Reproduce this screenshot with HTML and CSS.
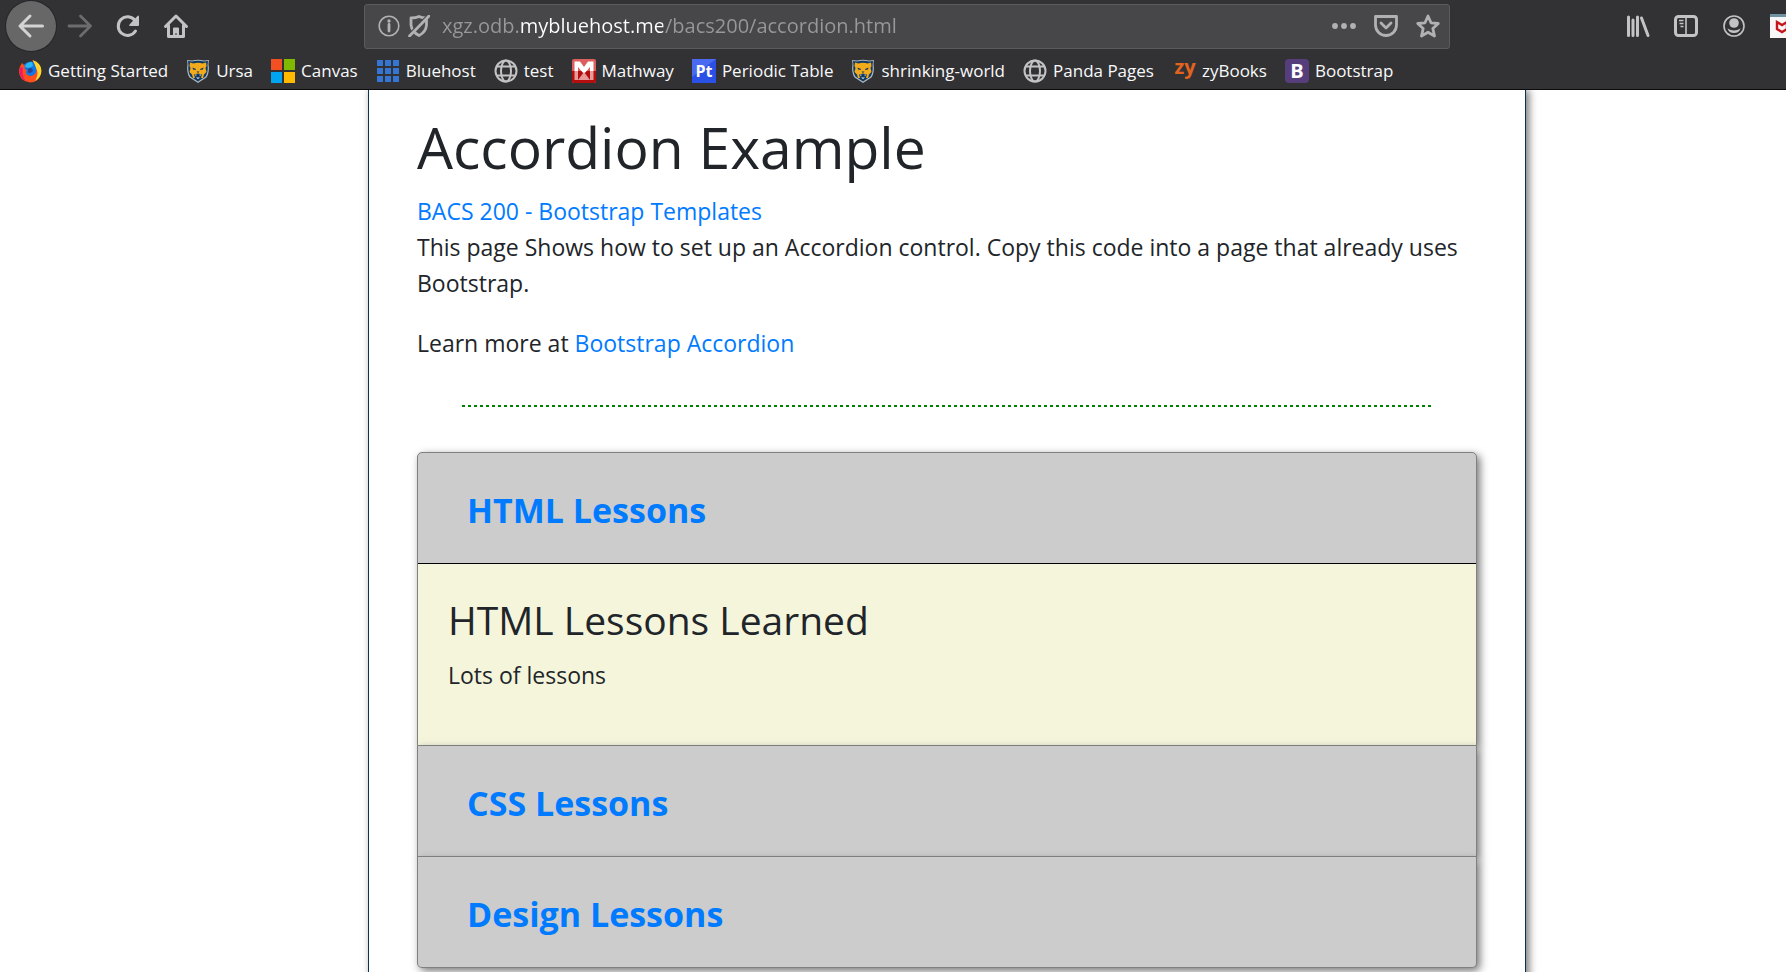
FILE: index.html
```html
<!DOCTYPE html>
<html lang="en">
<head>
<meta charset="utf-8">
<title>Accordion Example</title>
<link rel="stylesheet" href="styles.css">
</head>
<body>
<svg class="defs" aria-hidden="true">
  <symbol id="bear" viewBox="0 0 24 24">
    <path d="M1 1 6 1.500Q12 0 18 1.500L23 1 22.500 5Q24 13 20.500 18.500L12 24 3.500 18.500Q0 13 1.500 5Z" fill="#a9b4bd"/>
    <path d="M2 2 6 2.500Q12 1 18 2.500L22 2 21.500 6Q22.500 13 19.500 17.500L12 22.500 4.500 17.500Q1.500 13 2.500 6Z" fill="#123a60"/>
    <path d="M4 3.500 7.500 4.500Q12 3 16.500 4.500L20 3.500 20.500 7 19.500 9 20.500 13 18 15.500 17 19H7L6 15.500 3.500 13 4.500 9 3.500 7Z" fill="#f3ab1c"/>
    <path d="M6.500 8.500 10 10 9.500 11 7 10.500ZM17.500 8.500 14 10 14.500 11 17 10.500ZM10.500 12.500H13.500L12 14ZM8 15.500 12 14.500 16 15.500 15 19H9Z" fill="#123a60"/>
    <path d="M9 15.500H10.500L10 17.500ZM13.500 15.500H15L14 17.500ZM10 18.500H14L12 20Z" fill="#e8edf0"/>
  </symbol>
  <symbol id="globe" viewBox="0 0 24 24">
    <g fill="none" stroke="#c3c3c4" stroke-width="2"><circle cx="12" cy="12" r="10.500"/><ellipse cx="12" cy="12" rx="5" ry="10.500"/><path d="M3 7.500H21M3 16.500H21" stroke-width="1.800"/></g>
  </symbol>
</svg>
<header class="chrome">
  <div class="toolbar">
    <nav class="nav-buttons" aria-label="Navigation">
      <button class="back" aria-label="Back"><svg class="icon" viewBox="0 0 24 24"><path d="M1 12H23.500M11 2 1 12 11 22" fill="none" stroke="#d3d3d4" stroke-width="3" stroke-linecap="round" stroke-linejoin="round"/></svg></button>
      <button class="tool" aria-label="Forward"><svg class="icon" viewBox="0 0 24 24"><path d="M1 12H22.500M12.500 2 22.500 12 12.500 22" fill="none" stroke="#6c6c6e" stroke-width="2.800" stroke-linecap="round" stroke-linejoin="round"/></svg></button>
      <button class="tool" aria-label="Reload"><svg class="icon" viewBox="0 0 24 24"><path d="M19.500 17A9.300 9.300 0 1 1 19 6.500" fill="none" stroke="#c3c3c4" stroke-width="3" stroke-linecap="round"/><path d="M22 1.500Q23 1.500 23 2.500V11Q23 12 22 12H14Q12.500 12 13.500 10.500Z" fill="#c3c3c4"/></svg></button>
      <button class="tool" aria-label="Home"><svg class="icon" viewBox="0 0 24 24"><path d="M1.500 12.500 12 2 22.500 12.500M4.500 11V22.500H19.500V11" fill="none" stroke="#c3c3c4" stroke-width="3" stroke-linecap="round" stroke-linejoin="round"/><path d="M9 23V14.500Q9 13.500 10 13.500H14Q15 13.500 15 14.500V23H12.500V19H11.500V23Z" fill="#c3c3c4"/></svg></button>
    </nav>
    <div class="urlbar">
      <button class="slim" aria-label="Site information"><svg class="icon22" viewBox="0 0 22 22"><circle cx="11" cy="11" r="9.800" fill="none" stroke="#b1b1b3" stroke-width="1.600"/><path d="M11 9.500V16" stroke="#b1b1b3" stroke-width="2.800" stroke-linecap="round"/><circle cx="11" cy="6" r="1.700" fill="#b1b1b3"/></svg></button>
      <button class="slim" aria-label="Tracking protection"><svg class="icon22" viewBox="0 0 22 22"><path d="M3 3Q8 3 11 1.500 14 3 18.500 3V10Q18 17 11 20.500 4 17 3 10Z" fill="none" stroke="#b1b1b3" stroke-width="2.800" stroke-linejoin="round"/><path d="M20 0 0.500 20" stroke="#474749" stroke-width="2"/><path d="M21 1 1.500 21" stroke="#b1b1b3" stroke-width="2.800" stroke-linecap="round"/></svg></button>
      <input class="address" type="text" aria-label="Address" value="xgz.odb.mybluehost.me/bacs200/accordion.html">
      <button class="action" aria-label="Page actions"><svg class="icon" viewBox="0 0 24 24" fill="#b1b1b3"><circle cx="3" cy="12" r="2.900"/><circle cx="12" cy="12" r="2.900"/><circle cx="21" cy="12" r="2.900"/></svg></button>
      <button class="action" aria-label="Save to Pocket"><svg class="icon" viewBox="0 0 24 24" fill="none" stroke="#b1b1b3" stroke-width="2.800" stroke-linecap="round" stroke-linejoin="round"><path d="M1.500 2.500H22.500V11A10.500 10.500 0 0 1 1.500 11Z"/><path d="M7 9 12 14 17 9"/></svg></button>
      <button class="action" aria-label="Bookmark this page"><svg class="icon" viewBox="0 0 24 24"><path d="M12 2 15 8.800 22.300 9.500 16.800 14.500 18.500 22 12 18.200 5.500 22 7.200 14.500 1.700 9.500 9 8.800Z" fill="none" stroke="#b1b1b3" stroke-width="2.800" stroke-linejoin="round"/></svg></button>
    </div>
    <div class="extras">
      <button class="tool" aria-label="Library"><svg class="icon" viewBox="0 0 24 24" stroke="#c3c3c4" stroke-width="3" stroke-linecap="round"><path d="M2.500 3V21.500M7 6V21.500M11.500 3V21.500M15.500 4 22 21.500"/></svg></button>
      <button class="tool" aria-label="Sidebars"><svg class="icon" viewBox="0 0 24 24" fill="none" stroke="#c3c3c4"><rect x="1.500" y="2.500" width="21" height="19" rx="3" stroke-width="3"/><path d="M12 3V21" stroke-width="1.600"/><path d="M5 6.500H9.500M5.500 9.500H9.500M6.500 12.500H9.500" stroke-width="1.400"/></svg></button>
      <button class="tool" aria-label="Account"><svg class="icon" viewBox="0 0 24 24"><circle cx="12" cy="12" r="10" fill="none" stroke="#c3c3c4" stroke-width="1.600"/><circle cx="12" cy="9" r="4.800" fill="#c3c3c4"/><path d="M5.500 14.500Q12 18.500 18.500 14.500Q17 19 12 19Q7 19 5.500 14.500Z" fill="#c3c3c4"/></svg></button>
      <button class="tool" aria-label="McAfee WebAdvisor"><svg class="icon" viewBox="0 0 24 24"><path d="M0 0H24V24H0Z" fill="#f7f7f7"/><path d="M0 0H24V3H0Z" fill="#6f93a3"/><path d="M7 8 12 11 17 8V15L12 18 7 15Z" fill="none" stroke="#c4161c" stroke-width="2.400"/></svg></button>
    </div>
  </div>
  <nav class="bookmarks" aria-label="Bookmarks">
    <a href="#"><svg class="icon" viewBox="0 0 24 24"><circle cx="13" cy="12" r="9.500" fill="#0f77e8"/><path d="M14 3Q8 3 7 8L11 9 15 7Z" fill="#26b9f4"/><path d="M10 9.500Q14 8 15 11.500 13.500 15 10 13.500Z" fill="#29408f"/><path d="M4 4 7 7Q5.500 10 9 11.500 7 13 9 15.500 13 18.500 17 15 20 11 17 6 16 3 14.500 1.500 23 4 23 13 22 23 12 23.500 1 22 1 12 1.500 7 4 4Z" fill="#ff4f1d"/><path d="M14.500 1Q23.500 4 23.500 12 23 19 17 22 21 15 18.500 10 17 5 14.500 1Z" fill="#ffd62e"/><path d="M2 8Q0 18 8 22.500 3 16 5 9Z" fill="#f4156b"/></svg>Getting Started</a>
    <a href="#"><svg class="icon"><use href="#bear"/></svg>Ursa</a>
    <a href="#"><svg class="icon" viewBox="0 0 24 24"><path d="M0 0H11V11H0Z" fill="#f25022"/><path d="M13 0H24V11H13Z" fill="#7fba00"/><path d="M0 13H11V24H0Z" fill="#00a4ef"/><path d="M13 13H24V24H13Z" fill="#ffb900"/></svg>Canvas</a>
    <a href="#"><svg class="icon" viewBox="0 0 24 24" fill="#3575d3"><path d="M1 1H7V7H1ZM9 1H15V7H9ZM17 1H23V7H17ZM1 9H7V15H1ZM9 9H15V15H9ZM17 9H23V15H17ZM1 17H7V23H1ZM9 17H15V23H9ZM17 17H23V23H17Z"/></svg>Bluehost</a>
    <a href="#"><svg class="icon"><use href="#globe"/></svg>test</a>
    <a href="#"><svg class="icon" viewBox="0 0 24 24"><rect width="24" height="24" rx="2" fill="#dc5f5f"/><path d="M0 12H24V22Q24 24 22 24H2Q0 24 0 22Z" fill="#b40d0d"/><path d="M2.500 2.500H8L12 8 16 2.500H21.500V12H18V8L12 15 6 8V12H2.500Z" fill="#fff"/><path d="M2.500 12H6V21H2.500ZM18 12H21.500V21H18ZM12 13 18 21H6Z" fill="#e79a9a"/></svg>Mathway</a>
    <a href="#"><svg class="icon" viewBox="0 0 24 24"><rect width="24" height="24" fill="#2b50e6"/><path d="M0 0H24L0 18Z" fill="#4a6bf0"/><text class="logo-pt" x="12" y="18" text-anchor="middle">Pt</text></svg>Periodic Table</a>
    <a href="#"><svg class="icon"><use href="#bear"/></svg>shrinking-world</a>
    <a href="#"><svg class="icon"><use href="#globe"/></svg>Panda Pages</a>
    <a href="#"><svg class="icon" viewBox="0 0 24 24"><text class="logo-zy" x="13" y="15" text-anchor="middle">zy</text></svg>zyBooks</a>
    <a href="#"><svg class="icon" viewBox="0 0 24 24"><rect width="24" height="24" rx="4" fill="#563d7c"/><text class="logo-b" x="12" y="19" text-anchor="middle">B</text></svg>Bootstrap</a>
  </nav>
</header>
<main class="viewport">
  <div class="sheet">
    <h1>Accordion Example</h1>
    <p class="intro"><a href="#">BACS 200 - Bootstrap Templates</a><br>This page Shows how to set up an Accordion control. Copy this code into a page that already uses Bootstrap.</p>
    <p class="more">Learn more at <a href="#">Bootstrap Accordion</a></p>
    <hr>
    <div class="accordion">
      <section class="card">
        <h3 class="card-header open"><a href="#html">HTML Lessons</a></h3>
        <div class="card-body" id="html">
          <h2>HTML Lessons Learned</h2>
          <p>Lots of lessons</p>
        </div>
      </section>
      <section class="card"><h3 class="card-header"><a href="#css">CSS Lessons</a></h3></section>
      <section class="card"><h3 class="card-header"><a href="#design">Design Lessons</a></h3></section>
    </div>
  </div>
</main>
</body>
</html>
```
FILE: styles.css
```css
* { box-sizing: border-box; }
body {
  margin: 0;
  height: 100vh;
  display: flex;
  flex-direction: column;
  overflow: hidden;
  background: #fff;
  color: #212529;
  font: 23px/36px "Open Sans", "Noto Sans", sans-serif;
}
h1, h2, h3, p { margin: 0; font-weight: 400; }
a { color: #007bff; text-decoration: none; }
button { padding: 0; border: 0; background: none; display: flex; align-items: center; justify-content: center; }
.defs { display: none; }
.icon { width: 24px; height: 24px; flex: none; overflow: visible; }
.icon22 { width: 22px; height: 22px; flex: none; }

/* Browser chrome */
.chrome { flex: none; background: #323234; border-bottom: 1px solid #0c0c0d; overflow: hidden; }
.toolbar { display: flex; align-items: center; height: 52px; }
.nav-buttons { display: flex; align-items: center; gap: 24px; width: 364px; padding-left: 6px; flex: none; }
.back { width: 50px; height: 50px; border-radius: 50%; background: #676768; box-shadow: 0 0 0 1px #262628; margin-right: -12px; }
.urlbar {
  flex: 1;
  display: flex;
  align-items: center;
  height: 45px;
  padding: 0 9px 0 13px;
  background: #474749;
  border: 1px solid #5b5b5d;
  border-radius: 3px;
}
.slim { margin-right: 8px; }
.address {
  flex: 1;
  min-width: 0;
  margin-left: 4px;
  padding: 0;
  border: 0;
  outline: 0;
  font: 20px/28px "Open Sans", "Noto Sans", sans-serif;
  color: #fff;
  background: linear-gradient(90deg, #98989a 77px, #fff 77px, #fff 221px, #98989a 221px);
  -webkit-background-clip: text;
  background-clip: text;
  -webkit-text-fill-color: transparent;
}
.action { margin-left: 18px; }
.extras { display: flex; gap: 24px; flex: none; width: 336px; justify-content: flex-end; }
.extras .tool:last-child { margin-right: -8px; }
.bookmarks { display: flex; align-items: center; gap: 18px; height: 37px; padding: 1px 18px 0; }
.bookmarks a { display: flex; align-items: center; gap: 6px; color: #f9f9fa; font-size: 17px; line-height: 26px; white-space: nowrap; }
.logo-pt { font: 700 16px "Open Sans", sans-serif; fill: #fff; }
.logo-zy { font: 700 20px "Open Sans", sans-serif; fill: #e0641f; }
.logo-b { font: 700 20px "Open Sans", sans-serif; fill: #fff; }

/* Page */
.viewport { flex: 1; min-height: 0; overflow: hidden; padding: 0 260px 0 368px; }
.sheet {
  min-height: 100%;
  padding: 21px 48px 48px;
  border: solid #0d3152;
  border-width: 0 1px;
  box-shadow: 3px 0 8px #777;
}
h1 { font-size: 57px; line-height: 72px; margin-bottom: 10px; }
.intro { margin-bottom: 24px; }
hr {
  height: 2px;
  margin: 44px 44px 45px 45px;
  border: 0;
  background: repeating-linear-gradient(90deg, #008000 0 3px, transparent 3px 6px);
}
.card {
  border: 1px solid #808080;
  background: #ccc;
  box-shadow: 3px 3px 8px #777;
}
.card + .card { border-top: 0; }
.card:first-child { border-radius: 5px 5px 0 0; }
.card:last-child { border-radius: 0 0 5px 5px; }
.card-header { padding: 33px 49px 28px; font-size: 34px; line-height: 49px; }
.card-header a { font-weight: 700; }
.open { border-bottom: 1px solid #000; }
.card-body { padding: 29px 30px 52px; background: #f5f5dc; }
h2 { font-size: 39px; line-height: 54px; margin-bottom: 10px; }
```
